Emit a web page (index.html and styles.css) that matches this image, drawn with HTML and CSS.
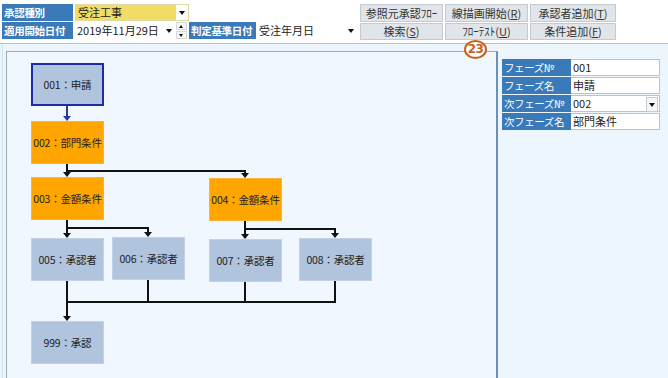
FILE: index.html
```html
<!DOCTYPE html>
<html lang="ja">
<head>
    <meta charset="UTF-8" />
    <title>承認フロー設定</title>
    <link rel="stylesheet" href="styles.css">
</head>
<body>
    <!-- Top toolbar -->
    <div class="toolbar">
        <div class="form">
            <div class="row">
                <span class="lbl">承認種別</span>
                <div class="select yellow"><span>受注工事</span><i class="drop"></i></div>
            </div>
            <div class="row">
                <span class="lbl">適用開始日付</span>
                <div class="select date"><span>2019年11月29日</span><i class="drop"></i></div>
                <div class="spin"><b class="up"></b><b class="down"></b></div>
                <span class="lbl lbl-base">判定基準日付</span>
                <div class="select base"><span>受注年月日</span><i class="drop"></i></div>
            </div>
        </div>
        <div class="buttons">
            <button class="btn">参照元承認ﾌﾛｰ</button>
            <button class="btn">線描画開始(<u>R</u>)</button>
            <button class="btn">承認者追加(<u>T</u>)</button>
            <button class="btn">検索(<u>S</u>)</button>
            <button class="btn">ﾌﾛｰﾃｽﾄ(<u>U</u>)</button>
            <button class="btn">条件追加(<u>F</u>)</button>
        </div>
    </div>

    <div class="badge">23</div>

    <div class="main">
        <!-- Flow diagram canvas -->
        <div class="canvas">
            <svg class="wires" width="489" height="330" viewBox="0 0 489 330">
                <g fill="none" stroke-width="2">
                    <path d="M60 54 V65" stroke="#2a3aa8" />
                    <path d="M60 112 V121 M60 119 H238 V122" stroke="#111" />
                    <path d="M60 168 V182 M60 176 H141 V181" stroke="#111" />
                    <path d="M238 169 V183 M238 177 H328 V182" stroke="#111" />
                    <path d="M60 229 V265 M141 228 V250 M238 230 V250 M328 229 V250 M59 250 H329" stroke="#111" />
                </g>
                <g fill="#111">
                    <polygon points="56,64 64,64 60,69" fill="#2a3aa8" />
                    <polygon points="56,120 64,120 60,125" />
                    <polygon points="234,121 242,121 238,126" />
                    <polygon points="56,181 64,181 60,186" />
                    <polygon points="137,180 145,180 141,185" />
                    <polygon points="234,182 242,182 238,187" />
                    <polygon points="324,181 332,181 328,186" />
                    <polygon points="56,264 64,264 60,269" />
                </g>
            </svg>
            <div class="node sel n001">001：申請</div>
            <div class="node cond n002">002：部門条件</div>
            <div class="node cond n003">003：金額条件</div>
            <div class="node cond n004">004：金額条件</div>
            <div class="node n005">005：承認者</div>
            <div class="node n006">006：承認者</div>
            <div class="node n007">007：承認者</div>
            <div class="node n008">008：承認者</div>
            <div class="node n999">999：承認</div>
        </div>

        <!-- Phase detail panel -->
        <div class="side">
            <div class="fields">
                <span class="flbl">フェーズ№</span>
                <div class="fval">001</div>
                <span class="flbl">フェーズ名</span>
                <div class="fval">申請</div>
                <span class="flbl">次フェーズ№</span>
                <div class="fval combo">002<i class="drop boxed"></i></div>
                <span class="flbl">次フェーズ名</span>
                <div class="fval">部門条件</div>
            </div>
        </div>
    </div>
</body>
</html>
```

FILE: styles.css
```css
/* Page */
body {
    margin: 0;
    font-family: "Noto Sans CJK JP", "DejaVu Sans", sans-serif;
    font-size: 11px;
    color: #222;
    background-color: #eef6fd;
    position: relative;
    height: 378px;
    overflow: hidden;
}

/* Toolbar */
.toolbar {
    display: flex;
    height: 39px;
    padding: 4px 0 0 2px;
    background-color: #ffffff;
    border-bottom: 1px solid #9fc6e6;
}

.form {
    width: 358px;
    display: flex;
    flex-direction: column;
    gap: 1px;
}

.row {
    display: flex;
    height: 17px;
}

.lbl {
    width: 71px;
    background-color: #3a7ab8;
    color: #fff;
    font-weight: bold;
    font-size: 10.5px;
    letter-spacing: -0.3px;
    line-height: 17px;
    padding-left: 2px;
    box-sizing: border-box;
    white-space: nowrap;
    overflow: hidden;
}

.lbl-base {
    width: 67px;
    margin-left: 2px;
}

.select {
    display: flex;
    align-items: center;
    justify-content: space-between;
    margin-left: 2px;
    background-color: #fff;
    box-sizing: border-box;
    padding-left: 2px;
    line-height: 17px;
    white-space: nowrap;
}

.select.yellow {
    width: 114px;
    background: linear-gradient(to right, #f1dc68 0, #f1dc68 100px, #fff 100px);
    border: 1px solid #e2d9a6;
}

.select.date {
    width: 100px;
}

.select.base {
    width: 100px;
    margin-left: 1px;
}

.drop {
    width: 12px;
    height: 17px;
    position: relative;
    flex: none;
}

.drop::after {
    content: "";
    position: absolute;
    left: 3px;
    top: 7px;
    border-left: 3px solid transparent;
    border-right: 3px solid transparent;
    border-top: 4px solid #111;
}

.spin {
    width: 11px;
    margin-left: 1px;
    display: flex;
    flex-direction: column;
    gap: 1px;
}

.spin b {
    flex: 1;
    background-color: #f4f6f8;
    border: 1px solid #d6dbe0;
    position: relative;
}

.spin .up::after,
.spin .down::after {
    content: "";
    position: absolute;
    left: 2px;
    top: 2px;
    border-left: 2px solid transparent;
    border-right: 2px solid transparent;
}

.spin .up::after {
    border-bottom: 3px solid #111;
}

.spin .down::after {
    border-top: 3px solid #111;
}

/* Toolbar buttons */
.buttons {
    display: grid;
    grid-template-columns: 83px 83px 86px;
    grid-template-rows: 18px 17px;
    column-gap: 2px;
    row-gap: 1px;
}

.btn {
    font-family: inherit;
    font-size: 11px;
    color: #333;
    background-color: #e1e5e9;
    border: 1px solid #c3cad1;
    padding: 0;
    line-height: 15px;
}

.btn u {
    text-decoration: underline;
}

/* Circled step number */
.badge {
    position: absolute;
    z-index: 2;
    left: 464px;
    top: 40px;
    width: 23px;
    height: 19px;
    box-sizing: border-box;
    border: 2px solid #c6621c;
    border-radius: 50%;
    color: #c6621c;
    font-weight: bold;
    font-size: 12px;
    line-height: 15px;
    text-align: center;
    font-family: "DejaVu Sans", sans-serif;
    letter-spacing: -0.5px;
    background-color: #fbfdff;
}

/* Main area */
.main {
    display: flex;
    height: 334px;
    border-left: 1px solid #cfe2f2;
    margin-left: 2px;
}

.canvas {
    position: relative;
    margin: 7px 0 0 3px;
    width: 489px;
    background-color: #f0f7fe;
    border-top: 1px solid #a4a8ad;
    border-left: 1px solid #a4a8ad;
    border-right: 2px solid #6b91bb;
}

.wires {
    position: absolute;
    left: 0;
    top: 0;
}

/* Diagram nodes */
.node {
    position: absolute;
    width: 73px;
    height: 43px;
    box-sizing: border-box;
    display: flex;
    align-items: center;
    justify-content: center;
    background-color: #b0c4de;
    border: 1px solid #c2d1e3;
    color: #222;
    font-size: 10.5px;
    letter-spacing: -0.2px;
    white-space: nowrap;
}

.node.sel {
    border: 2px solid #1c2ca6;
}

.node.cond {
    background-color: #ffa500;
    border-color: #fbb23a;
}

.n001 { left: 24px; top: 11px; }
.n002 { left: 24px; top: 69px; }
.n003 { left: 24px; top: 125px; }
.n004 { left: 202px; top: 126px; }
.n005 { left: 24px; top: 186px; }
.n006 { left: 105px; top: 185px; }
.n007 { left: 202px; top: 187px; }
.n008 { left: 292px; top: 186px; }
.n999 { left: 24px; top: 269px; }

/* Side panel */
.side {
    flex: 1;
    padding: 15px 0 0 4px;
}

.fields {
    display: grid;
    grid-template-columns: 69px 89px;
    grid-auto-rows: 17px;
    row-gap: 1px;
}

.flbl {
    background-color: #3a7ab8;
    color: #fff;
    font-size: 10.5px;
    letter-spacing: -0.4px;
    line-height: 17px;
    padding-left: 2px;
    white-space: nowrap;
    overflow: hidden;
}

.fval {
    background-color: #fff;
    border: 1px solid #b9c3cc;
    border-left: none;
    line-height: 15px;
    padding-left: 2px;
    display: flex;
    justify-content: space-between;
}

.drop.boxed {
    height: 13px;
    width: 10px;
    margin: 1px 1px 0 0;
    border: 1px solid #c5ccd3;
    background-color: #f4f6f8;
}

.drop.boxed::after {
    left: 2px;
    top: 5px;
}
```
